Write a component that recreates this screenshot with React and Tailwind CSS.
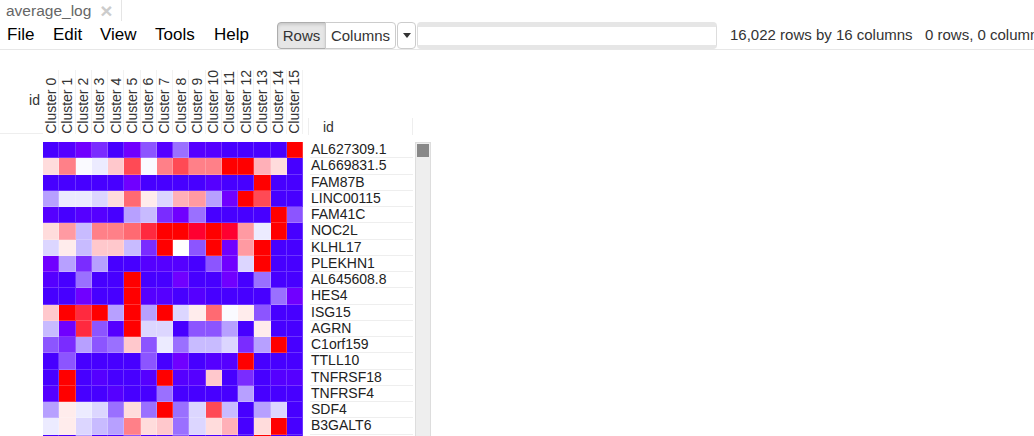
const palette = {
  a: '#4700ff', b: '#5500ff', c: '#7000ff', d: '#7a2cff', e: '#8c55ff', f: '#9a70ff',
  g: '#b7a0ff', h: '#c8bbff', i: '#dcd6ff', j: '#ecebff', k: '#fafaff', l: '#ffffff',
  m: '#ffecec', n: '#ffdcdc', o: '#ffc8cc', p: '#ffb0b8', q: '#ff9aa2', r: '#ff8088',
  s: '#ff6a72', t: '#ff4a55', u: '#ff2a3f', v: '#ff0000', w: '#ff0030',
};

const rows = [
  ['AL627309.1', 'abcdacebfbbaaaav'],
  ['AL669831.5', 'nrkjotkrtrrvvpna'],
  ['FAM87B', 'aaaaacaaaabaavaa'],
  ['LINC00115', 'gjjinsmipqgcvtaa'],
  ['FAM41C', 'babbaghdcfaaaave'],
  ['NOC2L', 'nqhrrsuvvwvwqjva'],
  ['KLHL17', 'imhoohdvlevcqvaa'],
  ['PLEKHN1', 'cgdgaabbbaecivaa'],
  ['AL645608.8', 'bafaavaacaacafaa'],
  ['HES4', 'aacaavbbabaaaafc'],
  ['ISG15', 'ovuvgvgvimskmeaa'],
  ['AGRN', 'hcuebviiaeegamaa'],
  ['C1orf159', 'edgefoejfhhidgva'],
  ['TTLL10', 'aeaaaaeacabbvaaa'],
  ['TNFRSF18', 'avabaabvbboadabb'],
  ['TNFRSF4', 'bvaabaafaaaagaaa'],
  ['SDF4', 'gmjifnfvfithagia'],
  ['B3GALT6', 'jmihgrnofinpanva'],
  ['', 'aagaaeaaeaabavaa'],
];

const clusters = Array.from({ length: 16 }, (_, i) => `Cluster ${i}`);
const menus = [['File', 'w-[46px]'], ['Edit', 'w-[47px]'], ['View', 'w-[55px]'], ['Tools', 'w-[59px]'], ['Help', 'w-[63px]']];

export default function App() {
  return (
    <div className="h-[436px] w-[1034px] overflow-hidden bg-white font-['Liberation_Sans',sans-serif] text-[#333]">
      <div className="flex h-[21px]">
        <div className="flex h-[21px] w-[122px] items-center gap-[9px] border-r border-[#e5e5e5] pl-[6px] text-[15.5px] leading-none text-[#666]">
          <span>average_log</span>
          <span className="text-[21px] font-bold text-[#ccc]">×</span>
        </div>
      </div>

      <div className="flex h-[29px] items-start border-b border-[#e7e7e7]">
        <nav className="flex w-[277px] pl-[7px] pt-[3px] text-[17px] leading-[22px] text-black">
          {menus.map(([m, w]) => (
            <span key={m} className={w}>{m}</span>
          ))}
        </nav>
        <div className="mt-px flex h-[27px] text-[15px] leading-[25px] text-[#333]">
          <div className="h-[27px] w-[49px] rounded-l-[4px] border border-[#adadad] bg-[#e6e6e6] text-center shadow-[inset_0_2px_3px_rgba(0,0,0,0.125)]">Rows</div>
          <div className="-ml-px h-[27px] w-[71px] rounded-r-[4px] border border-[#ccc] bg-white text-center">Columns</div>
          <div className="ml-px flex h-[27px] w-[19px] items-center justify-center rounded-[4px] border border-[#ccc] bg-white">
            <span className="h-0 w-0 border-x-[4px] border-t-[5px] border-x-transparent border-t-[#333]" />
          </div>
          <div className="ml-px h-[27px] w-[300px] rounded-[4px] border-x border-[#ddd] border-t-[5px] border-b-[4px] border-y-[#e6e6e6] bg-white" />
        </div>
        <div className="ml-[13px] flex whitespace-nowrap pt-[4px] text-[15px] leading-[20px]">
          <span className="w-[195px]">16,022 rows by 16 columns</span>
          <span>0 rows, 0 columns</span>
        </div>
      </div>

      <div className="flex pt-[20px]">
        <div className="w-[43px]">
          <div className="flex h-[64px] items-center justify-end border-b border-[#eee] pb-[4px] pr-[3px] text-[14px] leading-none">id</div>
        </div>

        <div className="w-[260px]">
          <div className="grid h-[63px] grid-cols-16">
            {clusters.map((c) => (
              <div key={c} className="flex justify-center border-r border-[#f2f2f2]">
                <span className="rotate-180 text-[14px] leading-[16px] [writing-mode:vertical-rl]">{c}</span>
              </div>
            ))}
          </div>
          <div className="mt-[9px] grid grid-cols-16 auto-rows-[16.25px]">
            {rows.flatMap(([, line], r) =>
              [...line].map((c, i) => (
                <div key={`${r}-${i}`} className="border-r border-b border-[#ffffff33]" style={{ backgroundColor: palette[c] }} />
              ))
            )}
          </div>
        </div>

        <div className="ml-[5px] w-[105px]">
          <div className="mt-[48px] flex h-[17px] items-center border-x border-[#eee] pl-[14px] text-[14px] leading-none">id</div>
          <div className="ml-[2px] mt-[7px]">
            {rows.map(([name], r) => (
              <div key={r} className="h-[16.25px] border-b border-[#eee] pl-px text-[14px] leading-[15px] text-[#222]">{name}</div>
            ))}
          </div>
        </div>

        <div className="ml-[2px] mt-[72px] h-[300px] w-[16px] border border-[#ddd] bg-[#eee] px-px pt-px">
          <div className="h-[13px] bg-[#888]" />
        </div>
      </div>
    </div>
  );
}
